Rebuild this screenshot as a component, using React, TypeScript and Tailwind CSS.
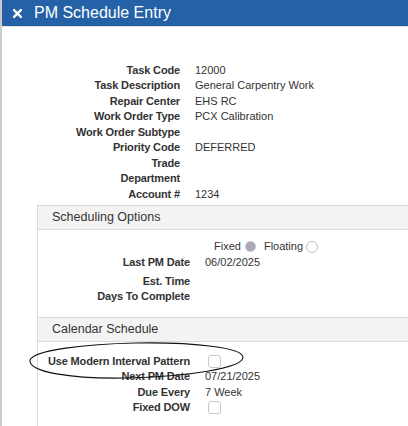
import React from 'react';

const topRows: [string, string][] = [
  ['Task Code', '12000'],
  ['Task Description', 'General Carpentry Work'],
  ['Repair Center', 'EHS RC'],
  ['Work Order Type', 'PCX Calibration'],
  ['Work Order Subtype', ''],
  ['Priority Code', 'DEFERRED'],
  ['Trade', ''],
  ['Department', ''],
  ['Account #', '1234'],
];

const Label: React.FC<{ children: React.ReactNode }> = ({ children }) => (
  <div className="text-right font-bold tracking-[-0.15px] text-[#333] whitespace-nowrap">{children}</div>
);

const Checkbox: React.FC = () => (
  <div className="mt-[1px] h-[13px] w-[13px] rounded-[3px] border border-[#c8c8c8] bg-white" />
);

const SectionHeader: React.FC<{ title: string }> = ({ title }) => (
  <div className="flex h-[25px] items-center border-y border-[#dadada] bg-[#f3f3f3] pl-[14px] text-[12.5px] text-[#333]">
    {title}
  </div>
);

const App: React.FC = () => {
  return (
    <div
      className="relative h-[426px] w-[408px] overflow-hidden border-l-2 border-[#cbcbcb] bg-white text-[11px] text-[#333]"
      style={{ fontFamily: '"Liberation Sans", Arial, sans-serif' }}
    >
      {/* title bar */}
      <div className="flex h-[26px] items-center bg-[#2461a6] text-white">
        <svg width="9" height="9" viewBox="0 0 9 9" className="ml-[11px] mr-[12px]">
          <path d="M1 1 L8 8 M8 1 L1 8" stroke="white" strokeWidth="2.4" strokeLinecap="square" />
        </svg>
        <span className="text-[16px] leading-none">PM Schedule Entry</span>
      </div>
      <div className="h-px bg-[#e2e2e2]" />

      {/* task info */}
      <div className="grid grid-cols-[178px_1fr] gap-x-[15px] pt-[35px] pb-[3px]">
        {topRows.map(([label, value]) => (
          <React.Fragment key={label}>
            <div className="flex h-[15.5px] items-center justify-end">
              <Label>{label}</Label>
            </div>
            <div className="flex h-[15.5px] items-center whitespace-nowrap">{value}</div>
          </React.Fragment>
        ))}
      </div>

      <div className="ml-[35px] border-l border-[#dadada]">
        <SectionHeader title="Scheduling Options" />
        <div className="grid grid-cols-[152px_1fr] gap-x-[15px] pt-[9px] pb-[13.5px]">
          <div className="h-[16px]" />
          <div className="flex h-[16px] items-center pl-[9px]">
            <span>Fixed</span>
            <span className="ml-[4px] h-[11px] w-[11px] rounded-full border border-[#c4c4cc] bg-[#a9a9b8]" />
            <span className="ml-[8px]">Floating</span>
            <span className="ml-[3px] h-[12px] w-[12px] rounded-full border border-[#c4c4c4] bg-white" />
          </div>
          <div className="flex h-[16px] items-center justify-end">
            <Label>Last PM Date</Label>
          </div>
          <div className="flex h-[16px] items-center">06/02/2025</div>
          <div className="col-span-2 h-[3px]" />
          <div className="flex h-[15px] items-center justify-end">
            <Label>Est. Time</Label>
          </div>
          <div className="h-[15px]" />
          <div className="flex h-[15px] items-center justify-end">
            <Label>Days To Complete</Label>
          </div>
          <div className="h-[15px]" />
        </div>

        <SectionHeader title="Calendar Schedule" />
        <div className="grid grid-cols-[152px_1fr] gap-x-[15px] pt-[11px] pb-[20px]">
          <div className="flex h-[15.5px] items-center justify-end">
            <Label>Use Modern Interval Pattern</Label>
          </div>
          <div className="flex h-[15.5px] items-center pl-[3px]">
            <Checkbox />
          </div>
          <div className="flex h-[15.5px] items-center justify-end">
            <Label>Next PM Date</Label>
          </div>
          <div className="flex h-[15.5px] items-center">07/21/2025</div>
          <div className="flex h-[15.5px] items-center justify-end">
            <Label>Due Every</Label>
          </div>
          <div className="flex h-[15.5px] items-center">7 Week</div>
          <div className="flex h-[15.5px] items-center justify-end">
            <Label>Fixed DOW</Label>
          </div>
          <div className="flex h-[15.5px] items-center pl-[3px]">
            <Checkbox />
          </div>
        </div>
      </div>

      {/* hand-drawn annotation ellipse */}
      <svg
        className="pointer-events-none absolute left-[24px] top-[340px]"
        width="222"
        height="42"
        viewBox="0 0 222 42"
      >
        <path
          d="M4 20 C 8 10, 60 4, 110 3 C 170 2, 216 8, 217 17 C 218 28, 160 37, 100 38 C 45 39, 2 32, 4 20 Z"
          fill="none"
          stroke="#111"
          strokeWidth="1.1"
        />
      </svg>
    </div>
  );
};

export default App;
